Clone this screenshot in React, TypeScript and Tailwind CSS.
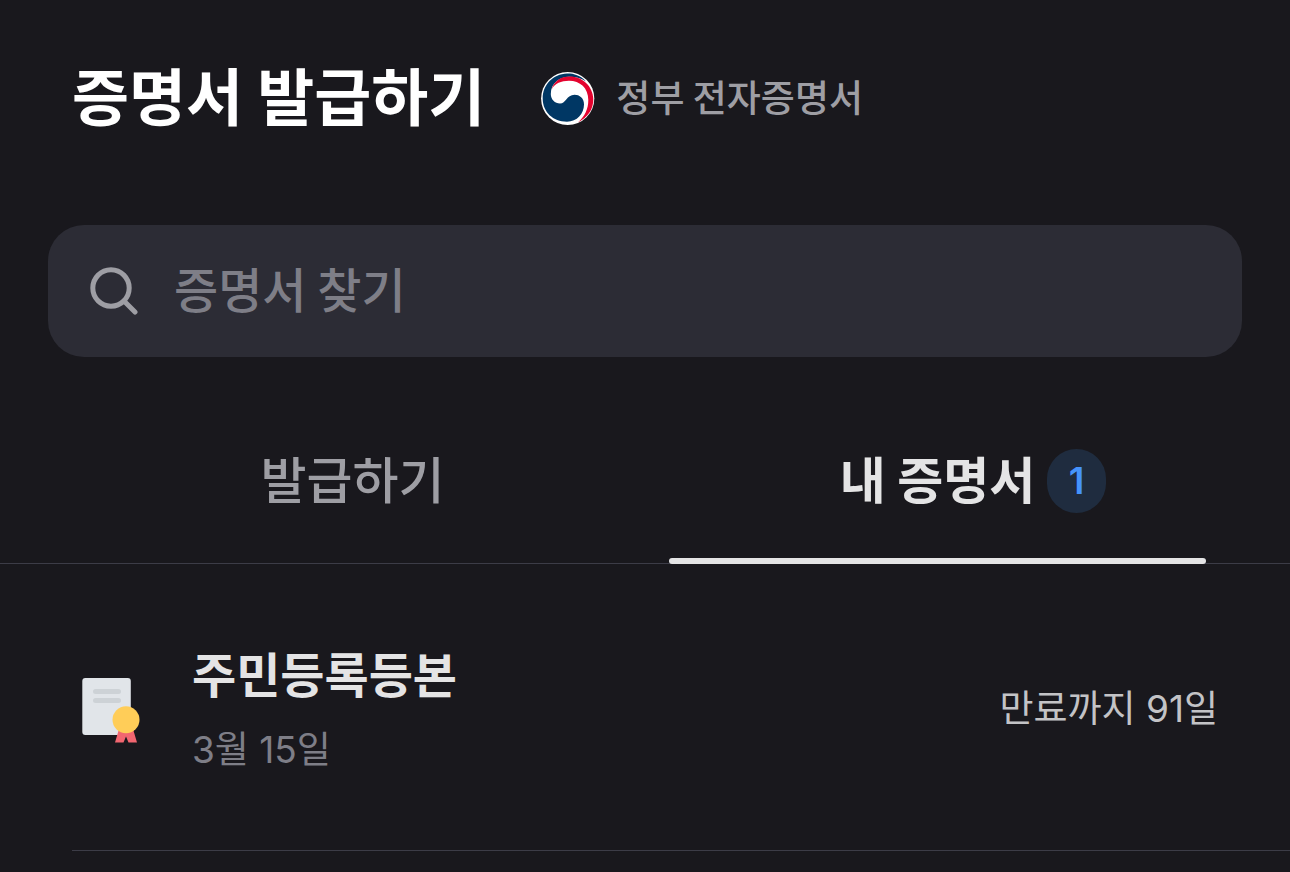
import { useState } from 'react';

const TABS = [
  { id: 'issue', label: '발급하기', count: 0 },
  { id: 'mine', label: '내 증명서', count: 1 },
];

const CERTIFICATES = [
  { id: 1, name: '주민등록등본', date: '3월 15일', expires: '만료까지 91일' },
];

function GovLogo() {
  return (
    <svg className="size-14 shrink-0" viewBox="0 0 56 56" aria-hidden="true">
      <circle cx="27.7" cy="28.5" r="26.6" fill="#fff" />
      <path
        d="M46 11.500C40 5 33 3.400 27 3.600C13 4 2.700 15 2.700 28.500C2.700 42 13 51.700 27 51.700C37 51.700 44 43.500 44 34.500C44 28 39.500 24.700 34.500 24.700C26.500 24.700 26 33.500 20 33.500C15 33.500 10.800 29.500 10.800 24C10.800 13 20 6.800 29 6.800C35 6.800 41 8 46 11.500Z"
        fill="#003764"
      />
      <path
        d="M11.500 19.500C14 11 21 6.500 29.500 6.500C43 6.500 53 17 53.300 29C53.500 39 48 47 38 52.500C45 46 48.300 39 48.300 30C48.300 18 40 10.800 29 10.800C21 10.800 15 13.500 11.500 19.500Z"
        fill="#e4032e"
      />
    </svg>
  );
}

function SearchIcon() {
  return (
    <svg className="size-12 shrink-0" viewBox="0 0 48 48" fill="none" stroke="#9e9ea4" strokeWidth="5" aria-hidden="true">
      <circle cx="21" cy="21" r="18.2" />
      <path d="M34 34L45 45" strokeLinecap="round" />
    </svg>
  );
}

function CertificateIcon() {
  return (
    <svg className="size-18 shrink-0" viewBox="0 0 72 72" aria-hidden="true">
      <rect x="10.3" y="7" width="48.5" height="57" rx="3" fill="#e1e5e9" />
      <rect x="21" y="18" width="28" height="5" rx="2.5" fill="#cdd2d6" />
      <rect x="21" y="27" width="28" height="5" rx="2.5" fill="#cdd2d6" />
      <path d="M47 58H61L65 71.500H56.500L54 65.500L51.500 71.500H43Z" fill="#f26670" />
      <circle cx="54" cy="48.700" r="13.500" fill="#ffcd58" />
    </svg>
  );
}

export default function App() {
  const [activeTab, setActiveTab] = useState('mine');

  return (
    <div className="min-h-screen bg-[#19181d] font-['Noto_Sans_CJK_KR',sans-serif]">
      <header className="flex items-center gap-[55px] px-[72px] pt-12">
        <h1 className="pb-2 text-[62px] leading-[92px] font-bold text-white">증명서 발급하기</h1>
        <div className="flex items-center gap-5">
          <GovLogo />
          <span className="pb-1 text-[37px] leading-[52px] font-medium text-[#9e9ea4]">정부 전자증명서</span>
        </div>
      </header>

      <label className="mx-12 mt-[77px] flex h-33 items-center gap-9 rounded-[36px] bg-[#2c2c35] px-[42px]">
        <SearchIcon />
        <input
          type="text"
          aria-label="증명서 찾기"
          placeholder="증명서 찾기"
          className="min-w-0 flex-1 bg-transparent pb-2 text-[48px] leading-[72px] font-medium text-[#e5e5e5] outline-none placeholder:text-[#7e7e87]"
        />
      </label>

      <div role="tablist" className="mt-12 flex gap-12 border-b border-[#3c3c47] px-[84px]">
        {TABS.map((tab) => {
          const active = tab.id === activeTab;
          return (
            <button
              key={tab.id}
              type="button"
              role="tab"
              aria-selected={active}
              onClick={() => setActiveTab(tab.id)}
              className={`relative flex h-[158px] flex-1 justify-center pt-9 text-[50px] leading-[72px] ${
                active ? 'font-bold text-[#e4e4e5]' : 'font-medium text-[#9e9ea4]'
              }`}
            >
              <span className="relative">
                {tab.label}
                {tab.count > 0 && (
                  <span className="absolute top-2 left-full ml-3 flex h-16 w-[59px] items-center justify-center rounded-[30px] bg-[#1f2c3f] font-['Inter',sans-serif] text-[37px] font-semibold text-[#4593fc]">
                    {tab.count}
                  </span>
                )}
              </span>
              {active && <span className="absolute inset-x-0 -bottom-px h-1.5 rounded-[3px] bg-[#e4e4e5]" />}
            </button>
          );
        })}
      </div>

      <ul>
        {CERTIFICATES.map((cert) => (
          <li key={cert.id} className="ml-[72px] flex h-[287px] items-center gap-12 border-b border-[#3c3c47] pr-[72px]">
            <CertificateIcon />
            <div className="flex-1">
              <p className="text-[48px] leading-[72px] font-bold text-[#e4e4e5]">{cert.name}</p>
              <p className="mt-[14px] font-['Inter','Noto_Sans_CJK_KR',sans-serif] text-[37px] leading-[56px] text-[#7e7e87]">
                {cert.date}
              </p>
            </div>
            <span className="pt-1 font-['Inter','Noto_Sans_CJK_KR',sans-serif] text-[37px] leading-[56px] text-[#c3c3c6]">
              {cert.expires}
            </span>
          </li>
        ))}
      </ul>
    </div>
  );
}
